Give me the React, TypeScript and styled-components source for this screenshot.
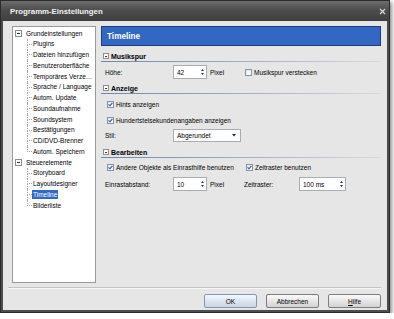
import React from 'react';
import styled, { createGlobalStyle } from 'styled-components';

const Global = createGlobalStyle`
  html, body { margin: 0; padding: 0; background: #ffffff; }
  body { font-family: "Liberation Sans", Arial, sans-serif; font-size: 6.5px; color: #000; }
  * { box-sizing: border-box; }
`;

const Window = styled.div`
  width: 390px;
  height: 313px;
  background: #4d4d4d;
  border: 1px solid #2b2b2b;
  box-shadow: 2px 2px 4px rgba(0, 0, 0, 0.45);
  display: flex;
  flex-direction: column;
`;

const TitleBar = styled.div`
  height: 20px;
  flex: none;
  background: linear-gradient(#6e6e6e, #4d4d4d 45%, #3f3f3f);
  display: flex;
  align-items: center;
  justify-content: space-between;
  padding: 0 3px 0 9px;
`;

const Title = styled.span`
  color: #f2f2f2;
  font-weight: bold;
  font-size: 7.8px;
`;

const Client = styled.div`
  flex: 1;
  margin: 0 2px 2px 2px;
  background: #e6e6e6;
  display: flex;
  flex-direction: column;
  padding: 5px 6px 0 9px;
`;

const Main = styled.div`
  display: flex;
  gap: 5px;
  height: 257px;
  flex: none;
`;

const Tree = styled.div`
  width: 84px;
  flex: none;
  background: #ffffff;
  border: 1px solid #9a9a9a;
  padding-top: 1px;
  display: flex;
  flex-direction: column;
`;

const TreeRow = styled.div`
  height: 10.75px;
  display: flex;
  align-items: center;
  white-space: nowrap;
`;

const GroupRow = styled(TreeRow)`
  padding-left: 2px;
  gap: 3px;
`;

const ExpandBox = styled.span`
  width: 7px;
  height: 7px;
  border: 1px solid #8c8c8c;
  background: #fff;
  display: flex;
  align-items: center;
  justify-content: center;
  &::after {
    content: '';
    width: 3px;
    height: 1px;
    background: #333;
  }
`;

const ChildRow = styled(TreeRow)`
  padding-left: 14px;
  align-items: stretch;
`;

const Connector = styled.span`
  width: 5px;
  display: flex;
  flex-direction: column;
  flex: none;
`;

const ConnTop = styled.span`
  flex: 1;
  border-left: 1px dotted #a8a8a8;
  border-bottom: 1px dotted #a8a8a8;
`;

const ConnBottom = styled.span<{ $last?: boolean }>`
  flex: 1;
  border-left: 1px ${p => (p.$last ? 'none' : 'dotted')} #a8a8a8;
`;

const TreeLabel = styled.span<{ $selected?: boolean }>`
  align-self: center;
  padding: 1px 1px;
  line-height: 7.5px;
  background: ${p => (p.$selected ? '#316ac5' : 'transparent')};
  color: ${p => (p.$selected ? '#ffffff' : '#000000')};
`;

const Panel = styled.div`
  flex: 1;
  display: flex;
  flex-direction: column;
`;

const BlueHeader = styled.div`
  height: 20px;
  flex: none;
  background: #3367c4;
  border: 1px solid #1d3b7a;
  color: #ffffff;
  font-weight: bold;
  font-size: 8.2px;
  display: flex;
  align-items: center;
  padding-left: 5px;
`;

const SectionHeader = styled.div<{ $top: number }>`
  margin-top: ${p => p.$top}px;
  height: 11px;
  flex: none;
  display: flex;
  align-items: center;
  gap: 2px;
  padding-left: 2px;
  border-bottom: 1px solid transparent;
  border-image: linear-gradient(to right, #6f82ad, #aab6cc 60%, #d6dbe4) 1;
  font-weight: bold;
  font-size: 7px;
`;

const MinusBox = styled.span`
  width: 6px;
  height: 6px;
  border: 1px solid #8c8c8c;
  background: #fff;
  display: flex;
  align-items: center;
  justify-content: center;
  &::after {
    content: '';
    width: 2px;
    height: 1px;
    background: #333;
  }
`;

const Row = styled.div<{ $top: number; $indent?: number }>`
  margin-top: ${p => p.$top}px;
  height: 14px;
  flex: none;
  display: flex;
  align-items: center;
  padding-left: ${p => p.$indent ?? 4}px;
  white-space: nowrap;
`;

const Cell = styled.div<{ $w: number; $pad?: number }>`
  width: ${p => p.$w}px;
  flex: none;
  padding-left: ${p => p.$pad ?? 0}px;
  display: flex;
  align-items: center;
`;

const CheckWrap = styled.label`
  display: flex;
  align-items: center;
  gap: 2px;
`;

const Box = styled.span`
  width: 7px;
  height: 7px;
  border: 1px solid #8093ab;
  background: linear-gradient(135deg, #e9e9e9, #ffffff);
  display: flex;
  align-items: center;
  justify-content: center;
`;

const Field = styled.div<{ $w: number; $h?: number }>`
  width: ${p => p.$w}px;
  height: ${p => p.$h ?? 14}px;
  background: #ffffff;
  border: 1px solid #a8adb4;
  display: flex;
  align-items: center;
  justify-content: space-between;
  padding: 0 2px 0 3px;
`;

const SpinArrows = styled.span`
  display: flex;
  flex-direction: column;
  gap: 2px;
`;

const Footer = styled.div`
  margin-top: 4px;
  margin-left: -4px;
  border-top: 1px solid #c4c4c4;
  box-shadow: inset 0 1px 0 #f6f6f6;
  padding-top: 6px;
  display: flex;
  justify-content: flex-end;
  gap: 9px;
`;

const Button = styled.button<{ $primary?: boolean }>`
  width: 53px;
  height: 14px;
  font-family: "Liberation Sans", Arial, sans-serif;
  font-size: 6.5px;
  color: #000;
  padding: 0;
  border-radius: 2px;
  border: 1px solid ${p => (p.$primary ? '#7f98b8' : '#7d7d7d')};
  background: ${p =>
    p.$primary
      ? 'linear-gradient(#f4f8fc, #dde6ef 50%, #c9d6e3)'
      : 'linear-gradient(#fbfbfb, #e6e6e6 50%, #d2d2d2)'};
`;

const Underline = styled.span`
  text-decoration: underline;
`;

const Check = ({ checked }: { checked: boolean }) => (
  <Box>
    {checked && (
      <svg width="5" height="5" viewBox="0 0 5 5">
        <path d="M0.6 2.4 L2 3.8 L4.4 0.9" fill="none" stroke="#2a4fa0" strokeWidth="1.1" />
      </svg>
    )}
  </Box>
);

const Spin = ({ value, w }: { value: string; w: number }) => (
  <Field $w={w}>
    <span>{value}</span>
    <SpinArrows>
      <svg width="3" height="2" viewBox="0 0 3 2"><path d="M0 2 L1.5 0 L3 2 Z" fill="#333" /></svg>
      <svg width="3" height="2" viewBox="0 0 3 2"><path d="M0 0 L1.5 2 L3 0 Z" fill="#333" /></svg>
    </SpinArrows>
  </Field>
);

const Select = ({ value, w }: { value: string; w: number }) => (
  <Field $w={w} $h={13}>
    <span>{value}</span>
    <svg width="4" height="3" viewBox="0 0 4 3" style={{ marginRight: 2 }}>
      <path d="M0 0 L4 0 L2 2.5 Z" fill="#222" />
    </svg>
  </Field>
);

const groups = [
  {
    name: 'Grundeinstellungen',
    items: [
      'Plugins',
      'Dateien hinzufügen',
      'Benutzeroberfläche',
      'Temporäres Verze…',
      'Sprache / Language',
      'Autom. Update',
      'Soundaufnahme',
      'Soundsystem',
      'Bestätigungen',
      'CD/DVD-Brenner',
      'Autom. Speichern',
    ],
  },
  {
    name: 'Steuerelemente',
    items: ['Storyboard', 'Layoutdesigner', 'Timeline', 'Bilderliste'],
  },
];

export default function App() {
  return (
    <>
      <Global />
      <Window>
        <TitleBar>
          <Title>Programm-Einstellungen</Title>
          <svg width="7" height="7" viewBox="0 0 7 7">
            <path d="M1 1 L6 6 M6 1 L1 6" stroke="#d6d6d6" strokeWidth="1.3" />
          </svg>
        </TitleBar>
        <Client>
          <Main>
            <Tree>
              {groups.map(g => (
                <React.Fragment key={g.name}>
                  <GroupRow>
                    <ExpandBox />
                    <TreeLabel>{g.name}</TreeLabel>
                  </GroupRow>
                  {g.items.map((it, i) => (
                    <ChildRow key={it}>
                      <Connector>
                        <ConnTop />
                        <ConnBottom $last={i === g.items.length - 1} />
                      </Connector>
                      <TreeLabel $selected={it === 'Timeline'}>{it}</TreeLabel>
                    </ChildRow>
                  ))}
                </React.Fragment>
              ))}
            </Tree>
            <Panel>
              <BlueHeader>Timeline</BlueHeader>

              <SectionHeader $top={5}>
                <MinusBox />
                Musikspur
              </SectionHeader>
              <Row $top={3}>
                <Cell $w={68}>Höhe:</Cell>
                <Cell $w={34}><Spin value="42" w={34} /></Cell>
                <Cell $w={38} $pad={3}>Pixel</Cell>
                <CheckWrap>
                  <Check checked={false} />
                  Musikspur verstecken
                </CheckWrap>
              </Row>

              <SectionHeader $top={4}>
                <MinusBox />
                Anzeige
              </SectionHeader>
              <Row $top={3} $indent={6}>
                <CheckWrap>
                  <Check checked />
                  Hints anzeigen
                </CheckWrap>
              </Row>
              <Row $top={2} $indent={6}>
                <CheckWrap>
                  <Check checked />
                  Hundertstelsekundenangaben anzeigen
                </CheckWrap>
              </Row>
              <Row $top={1}>
                <Cell $w={68}>Stil:</Cell>
                <Select value="Abgerundet" w={68} />
              </Row>

              <SectionHeader $top={5}>
                <MinusBox />
                Bearbeiten
              </SectionHeader>
              <Row $top={2} $indent={6}>
                <Cell $w={139}>
                  <CheckWrap>
                    <Check checked />
                    Andere Objekte als Einrasthilfe benutzen
                  </CheckWrap>
                </Cell>
                <CheckWrap>
                  <Check checked />
                  Zeitraster benutzen
                </CheckWrap>
              </Row>
              <Row $top={3}>
                <Cell $w={68}>Einrastabstand:</Cell>
                <Cell $w={34}><Spin value="10" w={34} /></Cell>
                <Cell $w={37} $pad={3}>Pixel</Cell>
                <Cell $w={55}>Zeitraster:</Cell>
                <Spin value="100 ms" w={47} />
              </Row>
            </Panel>
          </Main>
          <Footer>
            <Button $primary>OK</Button>
            <Button>Abbrechen</Button>
            <Button><Underline>H</Underline>ilfe</Button>
          </Footer>
        </Client>
      </Window>
    </>
  );
}
